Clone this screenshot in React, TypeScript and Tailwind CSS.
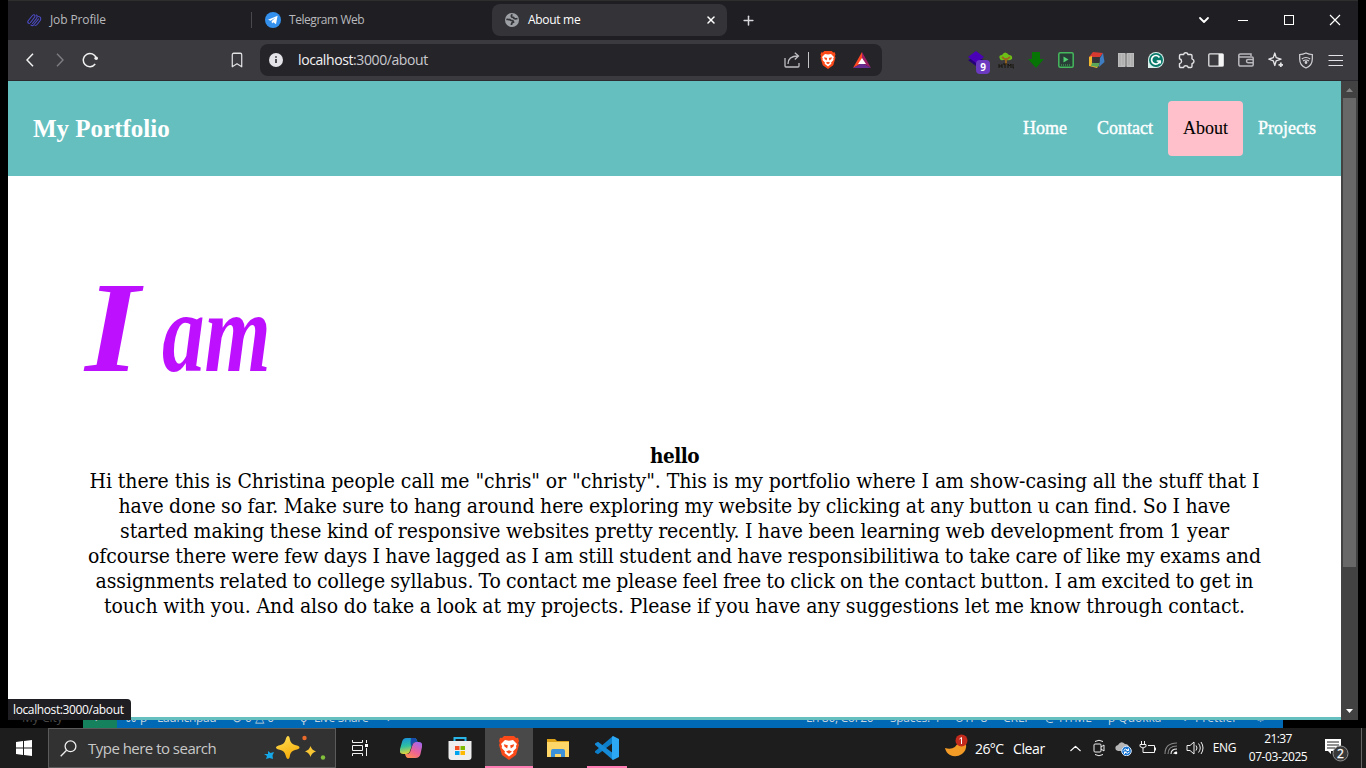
import type { ReactNode } from "react";
import { Bookmark, ChevronDown, ChevronUp, Plus, X } from "lucide-react";

const story = [
  { w: "w-[1170px]", t: 'Hi there this is Christina people call me "chris" or "christy". This is my portfolio where I am show-casing all the stuff that I' },
  { w: "w-[1112px]", t: "have done so far. Make sure to hang around here exploring my website by clicking at any button u can find. So I have" },
  { w: "w-[1109px]", t: "started making these kind of responsive websites pretty recently. I have been learning web development from 1 year" },
  { w: "w-[1173px]", t: "ofcourse there were few days I have lagged as I am still student and have responsibilitiwa to take care of like my exams and" },
  { w: "w-[1158px]", t: "assignments related to college syllabus. To contact me please feel free to click on the contact button. I am excited to get in" },
  { w: "w-[1141px]", t: "touch with you. And also do take a look at my projects. Please if you have any suggestions let me know through contact." },
];

function Cell({ className, children }: { className: string; children?: ReactNode }) {
  return <div className={`flex shrink-0 items-center justify-center ${className}`}>{children}</div>;
}

function BraveLion({ className }: { className: string }) {
  return (
    <svg viewBox="0 0 20 24" className={className}>
      <path d="M5 0h10l2 2 2-.2L20 5l-.8 2L20 9l-3 10-7 5-7-5L0 9l.8-2L0 5l1-3.2L3 2z" fill="#fb4a1a" />
      <path d="M6 4l4 .7L14 4l4 4-1 2 .3 2-3.300 3.500 .5 1.500L10 20.500 5.500 17l.5-1.500L2.700 12l.3-2-1-2z" fill="#fff" />
      <path d="M4.800 8.300l4 .9-.6 3.300-2.700-2zM15.200 8.300l-4 .9.6 3.300 2.700-2zM7 15.500l3-1.200 3 1.200-3 2.200z" fill="#fb4a1a" />
    </svg>
  );
}

function TabStrip() {
  return (
    <div className="flex h-10 shrink-0 items-center border-t border-[#2e2e2e] bg-[#1f1e23] pb-px text-[12px] text-[#b9b9bd]">
      <div className="flex w-[243px] items-center pl-[18px]">
        <svg width="16" height="14" viewBox="0 0 16 14" fill="none" stroke="#4b4bc4" strokeWidth="1.100" strokeLinecap="round">
          <path d="M2 8L6 3Q8 .8 9 2.500Q9.300 3.500 8 5L4.500 9.500M3.500 10.500Q1 10 2 8M6.500 10.500l4-5Q12 3 10.500 2M5 12Q6.500 13.500 8 11.500l4.500-5.500M9 12.500q1.500 0 2.500-1.500L14.500 7q1-3-2-3.500" />
        </svg>
        <span className="ml-2 tracking-[-0.12px]">Job Profile</span>
      </div>
      <div className="flex h-4 w-[241px] items-center border-l border-[#48484d] pl-[13px]">
        <svg width="16" height="16" viewBox="0 0 16 16"><circle cx="8" cy="8" r="8" fill="#3390ec" /><path d="M3 7.700l9.600-3.900-1.600 8.400-2.700-2-1.300 1.200-.4-2.200 3.900-3.600L5.600 8.700z" fill="#fff" /></svg>
        <span className="ml-2 tracking-[-0.45px]">Telegram Web</span>
      </div>
      <div className="flex h-8 w-[235px] items-center rounded-lg bg-[#343338] pl-[13px] pr-[10px] text-white">
        <svg width="14" height="14" viewBox="0 0 14 14"><circle cx="7" cy="7" r="7" fill="#9da1a6" /><path d="M7.500 1.500Q5.500 2.500 7 4.200q2.200 0 2 1.300 1.500.6 3.500 0M1.300 6.500q3.500-.3 4.700.9Q8.500 7.500 8.500 9.200 6.500 9.500 6.400 12" stroke="#343338" strokeWidth="1.700" fill="none" /></svg>
        <span className="ml-[9px] grow tracking-[-0.3px]">About me</span>
        <X size={12} strokeWidth={3} />
      </div>
      <Cell className="w-[42px]"><Plus size={15} strokeWidth={2.400} className="text-[#d8d8da]" /></Cell>
      <div className="grow" />
      <Cell className="w-8 text-white"><ChevronDown size={16} strokeWidth={2.700} /></Cell>
      <Cell className="w-[46px]"><div className="h-px w-[10px] bg-white" /></Cell>
      <Cell className="w-[46px]"><div className="size-[10px] border border-white" /></Cell>
      <Cell className="w-[46px]"><svg width="12" height="12" viewBox="0 0 12 12" stroke="#fff" strokeWidth="1.200"><path d="M1 1l10 10M11 1L1 11" /></svg></Cell>
    </div>
  );
}

function Extensions() {
  return (
    <div className="mr-[7px] flex text-[#e3e3e5]">
      <Cell className="relative w-[30px]">
        <svg width="18" height="18" viewBox="0 0 18 18"><path d="M1 9l8 6 8-6-8-3z" fill="#250077" /><path d="M1 6l8-6 8 6-8 6z" fill="#4900b6" /></svg>
        <div className="absolute left-[15px] top-[9px] flex h-[14px] w-[14px] items-center justify-center rounded bg-[#6c3ac0] text-[10px] font-bold leading-none text-white">9</div>
      </Cell>
      <Cell className="w-[30px]">
        <svg width="16" height="17" viewBox="0 0 16 17"><path d="M2 7Q0 3 4 3q3-5 7 0 4 .4 3 4-3 2-5 1H5Q3 9 2 7z" fill="#6cbf17" /><path d="M4 5l4 3 4-3M8 13V6" stroke="#9b651d" strokeWidth="1.800" fill="none" /><path d="M1 12v4m3-4v4M1 14h3m1-2h4m-2 0v4m3 0v-4l1.500 2 1.500-2v4m2-4v4h1" stroke="#16150d" fill="none" /></svg>
      </Cell>
      <Cell className="w-[30px]"><svg width="16" height="16" viewBox="0 0 16 16"><path d="M4 0h8v7h4l-8 9-8-9h4z" fill="#067506" /></svg></Cell>
      <Cell className="w-[30px]"><svg width="16" height="16" viewBox="0 0 16 16"><rect x=".8" y=".8" width="14.400" height="14.400" rx="1.500" fill="#293e36" stroke="#45b85d" strokeWidth="1.500" /><path d="M5.500 4.500v6l5-3z" fill="#50d070" /><path d="M3 13h10" stroke="#45b85d" strokeDasharray="1 1" /></svg></Cell>
      <Cell className="w-[30px]"><svg width="17" height="16" viewBox="0 0 17 16"><path d="M5 0l10 1-3 4H3L1 5z" fill="#d83a32" /><path d="M1 5l3-1v8l7 1-2 3-8-2z" fill="#eeb72e" /><path d="M15 1l1.500 9-5.500 5 1-9z" fill="#3e7dc2" /><path d="M4 11l8-1-2 5-7-1z" fill="#5aa757" /><path d="M5.500 5h6v6h-6z" fill="#343338" /></svg></Cell>
      <Cell className="w-[30px]"><svg width="16" height="14" viewBox="0 0 16 14"><path d="M0 0h7l1 1 1-1h7v14H9l-1-1-1 1H0z" fill="#bbb" /><path d="M8 1v12" stroke="#666" /><path d="M2 1v12M14 1v12M5 1v11M11 1v11" stroke="#999" strokeWidth=".6" /></svg></Cell>
      <Cell className="w-[30px]"><svg width="16" height="16" viewBox="0 0 16 16"><path d="M0 16V8a8 8 0 1 1 8 8z" fill="#d9f1ec" /><circle cx="8" cy="8" r="7" fill="#08796a" /><path d="M11.500 5.500A4.300 4.300 0 1 0 12 9H8.700M12.200 9v2.500" stroke="#fff" strokeWidth="1.700" fill="none" /></svg></Cell>
      <Cell className="w-[30px]"><svg width="17" height="17" viewBox="0 0 17 17" fill="none" stroke="#e3e3e5" strokeWidth="1.400" strokeLinejoin="round"><path d="M2.700 2.500H5.600Q6 .8 7.800.8T10 2.500H12.800q1.200 0 1.200 1.200V6.800q2 .6 2 2.400t-2 2.400v2.700q0 1.200-1.200 1.200H10.300Q9.800 13.800 7.800 13.800T5.600 15.500H2.700q-1.200 0-1.200-1.200v-2.600Q3.600 11.200 3.600 9.200T1.500 6.700V3.700q0-1.200 1.200-1.200z" /></svg></Cell>
      <Cell className="w-[30px]"><svg width="16" height="14" viewBox="0 0 16 14"><rect x=".8" y=".8" width="14.400" height="12.400" rx="1" fill="none" stroke="#e3e3e5" strokeWidth="1.300" /><path d="M10.500 1h4.700v12h-4.700z" fill="#f4f4f5" /></svg></Cell>
      <Cell className="w-[30px]"><svg width="16" height="14" viewBox="0 0 16 14" fill="none" stroke="#b9b9bd" strokeWidth="1.500"><path d="M13 3V1H2.500Q.8 1 .8 2.500v8.700q0 1.800 1.800 1.800H14q1.200 0 1.200-1.200V5Q15.200 4 14 4H1M15 6.500h-5q-1.500 0-1.500 1.600t1.500 1.600h5" /></svg></Cell>
      <Cell className="w-[30px]"><svg width="16" height="16" viewBox="0 0 16 16" fill="none" stroke="#e3e3e5" strokeWidth="1.300" strokeLinejoin="round"><path d="M6.800 1l1.400 4.600L13 7.200 8.200 8.800l-1.400 4.700-1.500-4.700L.8 7.200l4.500-1.600z" /><path d="M12.800 10.500v4.500M10.500 12.800h4.500" strokeWidth="1.800" /></svg></Cell>
      <Cell className="w-[30px]"><svg width="16" height="17" viewBox="0 0 16 17" fill="none" stroke="#d5d5d8" strokeWidth="1.200"><path d="M8 1q3 1.500 6.300 1.500V7c0 5-2.300 7.500-6.300 9C4 14.500 1.700 12 1.700 7V2.500Q5 2.500 8 1z" /><path d="M3.800 7q4-3 8.400 0M5 9q3-2 6 0" /><circle cx="8" cy="10.500" r=".8" fill="#d5d5d8" /></svg></Cell>
      <Cell className="w-[30px]"><svg width="16" height="13" viewBox="0 0 16 13" stroke="#e3e3e5" strokeWidth="1.200"><path d="M.5 1.500h14.500M.5 6.500h14.500M.5 11.500h14.500" /></svg></Cell>
    </div>
  );
}

function Toolbar() {
  return (
    <div className="flex h-[41px] shrink-0 items-center border-b border-[#2c2b30] bg-[#3b3a3f] text-[#e3e3e5]">
      <Cell className="ml-[7px] w-[30px]"><svg width="8" height="14" viewBox="0 0 8 14" fill="none" stroke="#f1f1f2" strokeWidth="1.500"><path d="M7 .7L1 7l6 6.300" /></svg></Cell>
      <Cell className="w-[30px]"><svg width="8" height="14" viewBox="0 0 8 14" fill="none" stroke="#7d7d82" strokeWidth="1.400"><path d="M1 .7L7 7l-6 6.300" /></svg></Cell>
      <Cell className="w-[30px]"><svg width="17" height="16" viewBox="0 0 17 16" fill="none" stroke="#f1f1f2" strokeWidth="1.500"><path d="M13.200 12A6.600 6.600 0 1 1 14.200 6" /><circle cx="14.200" cy="6.200" r="1.800" fill="#f1f1f2" stroke="none" /></svg></Cell>
      <Cell className="ml-[117px] w-[30px]"><Bookmark size={18} strokeWidth={1.800} className="scale-x-[0.9]" /></Cell>
      <div className="ml-2 flex h-8 w-[622px] items-center rounded-lg bg-[#252429]">
        <Cell className="ml-[9px] w-[14px]"><svg width="14" height="14" viewBox="0 0 14 14"><circle cx="7" cy="7" r="7" fill="#e3e3e8" /><path d="M7 6v4M7 3.300v1.400" stroke="#35343a" strokeWidth="1.700" /></svg></Cell>
        <div className="ml-[15px] grow pb-px text-[14px] tracking-[-0.4px] text-[#c9c9ce]"><span className="text-[#f2f2f3]">localhost</span>:3000/about</div>
        <svg width="16" height="16" viewBox="0 0 16 16" fill="none" stroke="#bebec2" strokeWidth="1.300"><path d="M1 6v8q0 1 1 1h12q1 0 1-1v-3M4 12q0-8 10-8M10.800 .8L14.500 4l-3.700 3.500" /></svg>
        <div className="ml-2 h-4 w-px bg-[#c5c5c8]" />
        <BraveLion className="ml-[11px] h-[18px] w-4" />
        <svg width="18" height="16" viewBox="0 0 18 16" className="ml-[17px] mr-[11px]"><path d="M9 0L0 16l9-5z" fill="#ff4724" /><path d="M9 0l9 16-9-5z" fill="#9e1f63" /><path d="M0 16h18l-9-5z" fill="#662d91" /><path d="M9 6l4 6H5z" fill="#fff" /></svg>
      </div>
      <div className="grow" />
      <Extensions />
    </div>
  );
}

function Page() {
  return (
    <main className="flex w-[1333px] shrink-0 flex-col bg-white">
      <header className="flex h-[95px] shrink-0 items-center bg-[#65bfbf] pl-[25px] pr-[10px] font-['Liberation_Serif',serif] text-white">
        <h1 className="grow text-[25px] font-bold">My Portfolio</h1>
        <nav className="flex h-[55px] text-[18px] leading-[55px] [-webkit-text-stroke:0.4px]">
          <a className="px-[15px]">Home</a>
          <a className="px-[15px]">Contact</a>
          <a className="rounded bg-[#ffc0cb] px-[15px] text-black [-webkit-text-stroke:0.1px]">About</a>
          <a className="px-[15px]">Projects</a>
        </nav>
      </header>
      <section className="flex h-[541px] flex-col items-center">
        <div className="mt-[85px] h-[183px] w-full pl-[77px]">
          <div className="flex h-[128px] items-end font-['Liberation_Serif',serif] font-bold italic leading-none text-[#bd10ff]">
            <span className="mb-[-3px] w-[77px] origin-bottom-left scale-x-[1.08] text-[130px]">I</span>
            <span className="mb-[-1px] origin-bottom-left scale-x-[0.74] text-[115px]">am</span>
          </div>
        </div>
        <div className="flex flex-col items-center font-['DejaVu_Serif_Condensed','DejaVu_Serif',serif] text-[21px] leading-[25px] tracking-[-0.05px] text-black [word-spacing:-2px]">
          <h2 className="text-[20.5px] font-bold tracking-[-0.5px]">hello</h2>
          {story.map(({ w, t }) => (
            <p key={t} className={`${w} h-[25px] whitespace-nowrap [text-align-last:justify]`}>{t}</p>
          ))}
        </div>
      </section>
      <footer className="h-[3px] shrink-0 bg-[#65bfbf]" />
    </main>
  );
}

function EditorStrip() {
  return (
    <div className="flex h-2 shrink-0 items-end overflow-hidden bg-black text-[12px] leading-[20px] text-[#c6d4df]">
      <div className="h-5 w-[83px] pl-[22px] text-[#484848]">My City</div>
      <div className="h-5 w-[34px] bg-[#16825d] pl-3">›</div>
      <div className="flex h-5 w-[1166px] whitespace-nowrap bg-[#0069b5]">
        <span className="w-[40px] pl-2">⌘ ρ</span>
        <span className="w-[75px] tracking-[-0.3px]">Launchpad</span>
        <span className="w-[68px]">⊗ 0 △ 0</span>
        <span className="w-[14px]">ϙ</span>
        <span className="w-[73px] tracking-[-0.3px]">Live Share</span>
        <span className="grow">›</span>
        <span className="w-[84px] tracking-[-0.3px]">Ln 80, Col 20</span>
        <span className="w-[65px] tracking-[-0.3px]">Spaces: 4</span>
        <span className="w-[48px]">UTF-8</span>
        <span className="w-[42px]">CRLF</span>
        <span className="w-[63px]">@ HTML</span>
        <span className="w-[74px]">ρ Quokka</span>
        <span className="w-[73px]">✓ Prettier</span>
        <span className="w-[28px]">♤</span>
      </div>
    </div>
  );
}

function Taskbar() {
  return (
    <div className="flex h-10 shrink-0 bg-[#1d1d1d] text-white">
      <Cell className="w-12"><svg width="16" height="16" viewBox="0 0 16 16" fill="#fff"><path d="M0 2l7-1v6.500H0zM8 .9L16 0v7.500H8zM0 8.500h7V15l-7-1zM8 8.500h8V16l-8-1z" /></svg></Cell>
      <div className="flex w-[288px] items-center border border-[#5b5b5b] bg-[#323232] pl-[11px]">
        <svg width="17" height="17" viewBox="0 0 17 17" fill="none" stroke="#eee" strokeWidth="1.300"><circle cx="10.500" cy="6.300" r="5.400" /><path d="M6.600 10.200L.7 16.300" /></svg>
        <span className="ml-[11px] grow text-[15px] tracking-[-0.52px] text-[#c8c8c8]">Type here to search</span>
        <svg width="62" height="26" viewBox="0 0 62 26" className="mr-[9px]">
          <defs><linearGradient id="spark" x2=".4" y2="1"><stop stopColor="#ffe158" /><stop offset="1" stopColor="#f6ae0c" /></linearGradient></defs>
          <path d="M24 1q1.500 0 2 4 1 4 5 5 4.500.9 4.500 2.500T31 15q-4 1-5 5-.5 4-2 4t-2.500-4q-1-4-5-5-4.500-1-4.500-2.500T16.500 10q4-1 5-5 1-4 2.500-4z" fill="url(#spark)" />
          <path d="M46.500 11q1.200 4 5.500 5.500-4.300 1-5.500 5.500-1.200-4.500-5.500-5.500 4.300-1.500 5.500-5.500z" fill="#f8c534" />
          <path d="M4 16l2.500 2L10 17l-1.500 3.500L9 24l-3.500-1L2 24l1-3-3-2h4z" fill="#15a7e7" />
          <circle cx="40.500" cy="3" r="2.200" fill="#e96a2b" /><circle cx="59" cy="22.500" r="2.200" fill="#82bf3b" />
        </svg>
      </div>
      <Cell className="w-12"><svg width="16" height="16" viewBox="0 0 16 16" fill="none" stroke="#f1f1f1"><path d="M.5 0v2.500h10V0M.5 5.500h10v5H.5zM.5 16v-2.500h10V16M14.500 0v3M14.500 8v8" /><path d="M13 4h3v3h-3z" fill="#fff" stroke="none" /></svg></Cell>
      <Cell className="w-[53px]">
        <svg width="22" height="22" viewBox="0 0 22 22">
          <defs>
            <linearGradient id="copA" x2=".2" y2="1"><stop stopColor="#168de2" /><stop offset=".55" stopColor="#2fc1a0" /><stop offset="1" stopColor="#ddd33e" /></linearGradient>
            <linearGradient id="copB" x1=".8" x2=".2" y2="1"><stop stopColor="#a567ee" /><stop offset=".55" stopColor="#ee6395" /><stop offset="1" stopColor="#ff8d50" /></linearGradient>
          </defs>
          <path d="M6.500 1h8q2 0 3 4H15q-2 0-3 3l-2 6q-1 3-4 3H3q-4 0-3-5l2-7q1-4 4.500-4z" fill="url(#copA)" />
          <path d="M15.500 21H8q-2 0-3-4h2q2.500 0 3.500-3l2-6q1-3 3.500-3h3q4 0 3 5l-1.500 7q-1 4-5 4z" fill="url(#copB)" />
          <path d="M11 1h3.500q2 0 3 4H15q-2 0-3 3l-1 2q-1-5 0-9z" fill="#174cab" />
        </svg>
      </Cell>
      <Cell className="mr-[2px] w-[46px]"><svg width="24" height="24" viewBox="0 0 24 24"><path d="M6.500 6V2h11v4" fill="none" stroke="#29b5e8" strokeWidth="2" /><path d="M.5 5h23v16q0 3-3 3h-17q-3 0-3-3z" fill="#eee" /><path d="M7 10h4.500v4H7z" fill="#f25022" /><path d="M12.500 10H17v4h-4.500z" fill="#7fba00" /><path d="M7 15h4.500v4H7z" fill="#00a4ef" /><path d="M12.500 15H17v4h-4.500z" fill="#ffb900" /></svg></Cell>
      <Cell className="w-12 border-b-2 border-[#ff7db2] bg-[#494949]"><BraveLion className="mt-[1px] h-6 w-[20px]" /></Cell>
      <Cell className="w-[49px]"><svg width="22" height="19" viewBox="0 0 22 19"><path d="M0 0h8l2 2h12v5H0z" fill="#dca117" /><path d="M0 3h22v15H0z" fill="#ffd768" /><path d="M4 18v-6q0-2 2-2h10q2 0 2 2v6h-4v-3H8v3z" fill="#3b91da" /></svg></Cell>
      <Cell className="ml-[5px] w-10 border-b-2 border-[#ff7db2]">
        <svg width="24" height="24" viewBox="0 0 24 24" className="mt-[1px]"><path d="M18 0v6.800L3 18.300 0 16.500v-1.300z" fill="#0d7fca" /><path d="M0 7.500l3-1.800L18 17.300V24L0 8.800z" fill="#168bd8" /><path d="M18 0l6 3v18l-6 3-1-1V1z" fill="#2da8f5" /></svg>
      </Cell>
      <div className="grow" />
      <div className="flex items-center text-[14px]">
        <svg width="24" height="26" viewBox="0 0 24 26" className="mb-1 mr-[7px]"><path d="M1 15q10 3 14-7 5-1 7 3 1 6-4 10-6 4-12 1-4-2-5-7z" fill="#f39b27" /><circle cx="17.500" cy="7.500" r="6" fill="#c42b1c" /><path d="M15.500 6l2-1.500v6.500" stroke="#fff" fill="none" /></svg>
        <span className="w-[38px] tracking-[-0.6px]">26°C</span>
        <span className="w-[50px] tracking-[-0.4px]">Clear</span>
      </div>
      <Cell className="w-6"><ChevronUp size={17} strokeWidth={1.700} className="scale-x-[1.1]" /></Cell>
      <Cell className="w-6"><svg width="14" height="18" viewBox="0 0 14 18" fill="none" stroke="#eee"><path d="M3 2.500Q7 0 11 2.500M3 15.500q4 2.500 8 0" /><rect x="2" y="5" width="7" height="8" rx="1" /><path d="M9 8l3-2v6l-3-2" /></svg></Cell>
      <Cell className="w-6"><svg width="17" height="16" viewBox="0 0 17 16"><path d="M1 10q-2-4 2-5 3-5 7-1 4 0 4 4v3H3z" fill="#b6b6b6" /><circle cx="11.500" cy="11" r="4.800" fill="#1976d2" stroke="#dceafa" /><path d="M8.500 10.500q1.500-3 5 0m0-2v2h-2M14.500 12q-1.500 2.500-5 0m0 2v-2h2" stroke="#fff" fill="none" /></svg></Cell>
      <Cell className="w-6"><svg width="17" height="14" viewBox="0 0 17 14" fill="none" stroke="#f1f1f1"><path d="M2.500 0v3M5.500 0v3M1 3.500h6v2q-3 3-6 0zM4 7v4.500h11.500v-7H9M16.500 6.500v3" /></svg></Cell>
      <Cell className="w-6"><svg width="14" height="14" viewBox="0 0 14 14" fill="none" strokeWidth="1.100"><path d="M1 13Q1 2 13 2M4 13q0-8 9-8" stroke="#888" /><path d="M7 13q0-5 6-5M10 13q0-2 3-2" stroke="#eee" /><circle cx="12" cy="12" r="1.300" fill="#fff" /></svg></Cell>
      <Cell className="w-6"><svg width="18" height="14" viewBox="0 0 18 14" fill="none" stroke="#f1f1f1"><path d="M1 4.500h3l4-3.500v12L4 9.500H1zM10 4.500q2 2.500 0 5M12.500 2.500q3.500 4.500 0 9M15 1q4 6 0 12" /></svg></Cell>
      <Cell className="w-[35px] text-[12px] tracking-[-0.3px]">ENG</Cell>
      <div className="flex w-[72px] flex-col items-center pt-[2px] text-[12px] leading-[18px]">
        <span className="tracking-[-0.6px]">21:37</span>
        <span className="tracking-[-0.4px]">07-03-2025</span>
      </div>
      <Cell className="w-[45px]">
        <svg width="26" height="26" viewBox="0 0 26 26" className="mt-[3px]">
          <path d="M1 2h16v12H7v3l-3-3H1z" fill="#fff" /><path d="M3 5h12M3 8h12M3 11h8" stroke="#222" />
          <circle cx="16.500" cy="16.500" r="7.500" fill="#383838" stroke="#919191" />
          <text x="16.500" y="20.500" textAnchor="middle" fontSize="12" fill="#fff" stroke="#fff" strokeWidth=".3" fontFamily="Open Sans">2</text>
        </svg>
      </Cell>
      <div className="mr-1 ml-[2px] w-px bg-[#666]" />
    </div>
  );
}

export default function App() {
  return (
    <div className="flex h-[768px] w-[1366px] flex-col overflow-hidden bg-black font-['Open_Sans','Noto_Sans',sans-serif]">
      <div className="relative mx-2 flex h-[720px] shrink-0 flex-col">
        <TabStrip />
        <Toolbar />
        <div className="flex h-[639px]">
          <Page />
          <div className="flex w-[17px] flex-col items-center bg-[#424242]">
            <Cell className="h-[17px]"><svg width="7" height="4" viewBox="0 0 7 4"><path d="M0 4l3.500-4L7 4z" fill="#858585" /></svg></Cell>
            <div className="h-[469px] w-[13px] bg-[#686868]" />
            <div className="grow" />
            <Cell className="h-[19px]"><svg width="7" height="4" viewBox="0 0 7 4"><path d="M0 0h7L3.500 4z" fill="#fff" /></svg></Cell>
          </div>
        </div>
        <div className="absolute bottom-0 left-0 flex h-[21px] w-[123px] items-center rounded-tr bg-[#1f1e23] pl-[5px] text-[12px] tracking-[-0.38px] text-white">localhost:3000/about</div>
      </div>
      <EditorStrip />
      <Taskbar />
    </div>
  );
}
